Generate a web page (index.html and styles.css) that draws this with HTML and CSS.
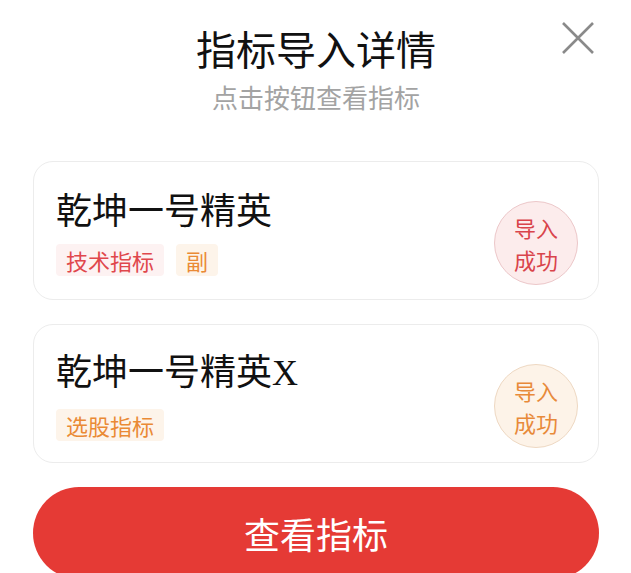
FILE: index.html
```html
<!DOCTYPE html>
<html lang="zh-CN">
<head>
<meta charset="UTF-8">
<meta name="viewport" content="width=device-width, initial-scale=1.0">
<title>指标导入详情</title>
<link rel="stylesheet" href="styles.css">
</head>
<body>

<div id="painel">
  <div class="cabecalho">
    <h2>指标导入详情</h2>
    <p>点击按钮查看指标</p>
    <button class="fechar" type="button">
      <svg width="34" height="34" viewBox="0 0 34 34">
        <path d="M2 2 L32 32 M32 2 L2 32" stroke="#8a8a8a" stroke-width="2.6" fill="none"/>
      </svg>
    </button>
  </div>

  <div class="cartao">
    <div class="info">
      <div class="nome">乾坤一号精英</div>
      <div class="tags">
        <span class="tag vermelho">技术指标</span>
        <span class="tag laranja">副</span>
      </div>
    </div>
    <div class="selo selo-vermelho">导入<br>成功</div>
  </div>

  <div class="cartao">
    <div class="info">
      <div class="nome">乾坤一号精英<span class="latino">X</span></div>
      <div class="tags">
        <span class="tag laranja">选股指标</span>
      </div>
    </div>
    <div class="selo selo-laranja">导入<br>成功</div>
  </div>

  <button class="btnVer" type="button">查看指标</button>
</div>

</body>
</html>
```

FILE: styles.css
```css
body {
  margin: 0;
  background-color: #fff;
  font-family: "Noto Sans CJK SC", "Noto Sans", sans-serif;
}

#painel {
  padding: 0 32px 0 33px;
}

.cabecalho {
  position: relative;
  text-align: center;
  padding-top: 22px;
  height: 161px;
  box-sizing: border-box;
}

.cabecalho h2 {
  margin: 0;
  font-size: 40px;
  line-height: 52px;
  font-weight: 400;
  color: #111;
}

.cabecalho p {
  margin: 5px 0 0 0;
  font-size: 26px;
  line-height: 36px;
  color: #a3a3a3;
}

.fechar {
  position: absolute;
  top: 21px;
  right: 4px;
  background: none;
  border: none;
  padding: 0;
  cursor: pointer;
}

.cartao {
  display: flex;
  align-items: center;
  justify-content: space-between;
  height: 139px;
  box-sizing: border-box;
  border: 1px solid #ececec;
  border-radius: 20px;
  padding: 0 22px 0 22px;
  margin-bottom: 24px;
}

.nome {
  font-size: 36px;
  line-height: 44px;
  color: #111;
}

.latino {
  font-family: "Liberation Serif", serif;
}

.tags {
  display: flex;
  gap: 12px;
  margin-top: 14px;
}

.tag {
  font-size: 22px;
  line-height: 32px;
  padding: 0 10px;
  border-radius: 4px;
}

.vermelho {
  color: #e0474c;
  background-color: #fdf2f2;
}

.laranja {
  color: #ea8a35;
  background-color: #fdf4ea;
}

.selo {
  width: 82px;
  height: 82px;
  border-radius: 50%;
  display: flex;
  align-items: center;
  justify-content: center;
  text-align: center;
  font-size: 22px;
  line-height: 32px;
  margin-right: -2px;
  margin-top: 24px;
}

.selo-vermelho {
  color: #d9444b;
  background-color: #fcecec;
  border: 1px solid #ecc7c9;
}

.selo-laranja {
  color: #e88a3a;
  background-color: #fdf3e8;
  border: 1px solid #eed8c2;
}

.btnVer {
  display: block;
  width: 100%;
  height: 92px;
  border: none;
  border-radius: 46px;
  background-color: #e53a35;
  color: #fff;
  font-family: "Noto Sans CJK SC", sans-serif;
  font-size: 36px;
  cursor: pointer;
}
```
